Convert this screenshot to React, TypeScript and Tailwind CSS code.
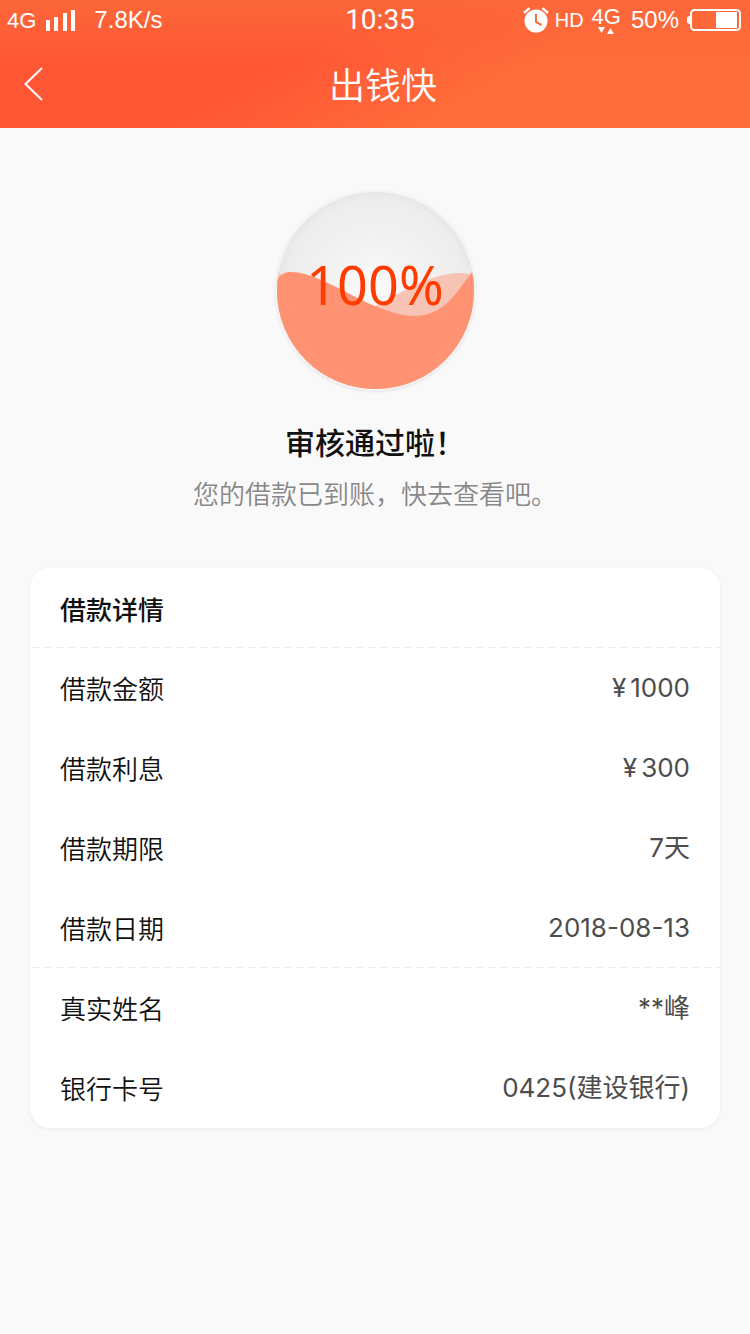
interface DetailRow {
  label: string
  value: string
  unit?: string
}

const LOAN_ROWS: DetailRow[] = [
  { label: '借款金额', value: '1000', unit: '¥' },
  { label: '借款利息', value: '300', unit: '¥' },
  { label: '借款期限', value: '7天' },
  { label: '借款日期', value: '2018-08-13' },
]

const ACCOUNT_ROWS: DetailRow[] = [
  { label: '真实姓名', value: '**峰' },
  { label: '银行卡号', value: '0425(建设银行)' },
]

function SignalIcon(): React.JSX.Element {
  return (
    <svg className="ml-2.5 h-[21px] w-[30px]" viewBox="0 0 30 21" fill="currentColor" aria-hidden="true">
      <rect x="0" y="10" width="4" height="11" />
      <rect x="8" y="7" width="4" height="14" />
      <rect x="17" y="3" width="4" height="18" />
      <rect x="25" y="0" width="4" height="21" />
    </svg>
  )
}

function AlarmIcon(): React.JSX.Element {
  return (
    <svg className="h-[26px] w-[26px]" viewBox="0 0 26 26" aria-hidden="true">
      <circle cx="13" cy="14" r="11.5" fill="#fff" />
      <path d="M1 6 6.5 1.2M25 6 19.5 1.2" stroke="#fff" strokeWidth="2.4" fill="none" />
      <path d="M13 7v8l5.5 3" stroke="#fd6739" strokeWidth="2" fill="none" />
    </svg>
  )
}

function BatteryIcon(): React.JSX.Element {
  return (
    <svg className="ml-2 h-[22px] w-[54px]" viewBox="0 0 54 22" aria-hidden="true">
      <rect x="4" y="1" width="49" height="20" rx="3.5" fill="none" stroke="#fff" strokeWidth="2" />
      <path d="M3.5 6v10L0 13.5v-5z" fill="#fff" />
      <rect x="29" y="3" width="21" height="16" fill="#fff" />
    </svg>
  )
}

function StatusBar(): React.JSX.Element {
  return (
    <div className="grid h-10 grid-cols-[1fr_auto_1fr] items-center pr-[9px] pl-[7px] font-['Liberation_Sans',sans-serif]">
      <div className="flex items-center">
        <span className="text-[22px]">4G</span>
        <SignalIcon />
        <span className="ml-[18px] text-2xl">7.8K/s</span>
      </div>
      <span className="pl-3 font-[Roboto,sans-serif] text-[28px] leading-9">10:35</span>
      <div className="flex items-center justify-end">
        <AlarmIcon />
        <span className="ml-1.5 text-xl">HD</span>
        <span className="ml-2 flex flex-col items-center text-[22px] leading-5">
          4G
          <svg className="h-[7px] w-4" viewBox="0 0 16 7" fill="currentColor" aria-hidden="true">
            <path d="M0 0h7L3.500 6zM9 7h7L12.500 1z" />
          </svg>
        </span>
        <span className="ml-2.5 text-2xl">50%</span>
        <BatteryIcon />
      </div>
    </div>
  )
}

function Header(): React.JSX.Element {
  return (
    <header className="bg-[linear-gradient(180deg,#fc6739_0%,#fc673900_50%),linear-gradient(150deg,#ff5635_40%,#ff6c3a_66%)] text-white">
      <StatusBar />
      <div className="grid h-22 grid-cols-[1fr_auto_1fr] items-center px-6">
        <button type="button" aria-label="返回" className="h-9 w-5">
          <svg className="h-9 w-5" viewBox="0 0 20 36" fill="none" stroke="currentColor" strokeWidth="2" aria-hidden="true">
            <path d="M18 2 1.500 18 18 34" />
          </svg>
        </button>
        <h1 className="pb-0.5 pl-4 text-4xl font-[350]">出钱快</h1>
      </div>
    </header>
  )
}

function ProgressBall(): React.JSX.Element {
  return (
    <div className="grid place-items-center">
      <svg className="col-start-1 row-start-1 size-[210px]" viewBox="0 0 210 210" aria-hidden="true">
        <defs>
          <radialGradient id="ball">
            <stop offset="0%" stopColor="#fafafa" />
            <stop offset="65%" stopColor="#f0f0f0" />
            <stop offset="92%" stopColor="#ededed" />
            <stop offset="100%" stopColor="#e6e6e6" />
          </radialGradient>
          <clipPath id="ballClip">
            <circle cx="105.500" cy="105.500" r="98.500" />
          </clipPath>
          <filter id="ballShadow" x="-10%" y="-10%" width="120%" height="120%">
            <feDropShadow dx="0" dy="1" stdDeviation="1.500" floodColor="#000" floodOpacity="0.1" />
          </filter>
        </defs>
        <circle cx="105.500" cy="105.500" r="100" fill="#f3f3f3" filter="url(#ballShadow)" />
        <circle cx="105.500" cy="105.500" r="98.500" fill="url(#ball)" />
        <g clipPath="url(#ballClip)">
          <path
            d="M0 86C14 86 16 96 26 107C50 134 84 132 105 121C130 109 160 88 190 88C198 88 202 90 210 96V210H0Z"
            fill="#f7c3b4"
          />
          <path
            d="M5 100C8 91 13 87 21 87C45 87 78 110 105 121C120 127 132 131 144 131C174 131 186 108 202 87H210V210H0Z"
            fill="#ff9272"
          />
        </g>
      </svg>
      <span className="col-start-1 row-start-1 pb-3 font-['Noto_Sans',sans-serif] text-[54px] leading-none text-[#ff3c00]">
        100%
      </span>
    </div>
  )
}

function DetailRows({ rows }: { rows: DetailRow[] }): React.JSX.Element {
  return (
    <dl>
      {rows.map((row) => (
        <div key={row.label} className="flex h-20 items-center justify-between px-[30px] pb-0.5 text-[26px]">
          <dt className="font-[350]">{row.label}</dt>
          <dd className="font-[Inter,'Noto_Sans_CJK_SC',sans-serif] text-[#4d4d4d]">
            {row.unit && <span className="mr-1">{row.unit}</span>}
            {row.value}
          </dd>
        </div>
      ))}
    </dl>
  )
}

function Divider(): React.JSX.Element {
  return (
    <div className="-mt-px ml-0.5 h-px bg-[repeating-linear-gradient(90deg,#ebebeb_0_7px,transparent_7px_12px)]" />
  )
}

export default function App(): React.JSX.Element {
  return (
    <div className="min-h-screen bg-[#f9f9f9] font-['Noto_Sans_CJK_SC',sans-serif] text-[#111]">
      <Header />
      <main className="px-[30px] pt-[57px] pb-8">
        <ProgressBall />
        <div className="mt-[26px] text-center">
          <h2 className="text-3xl leading-10 font-medium">审核通过啦！</h2>
          <p className="mt-3 text-[26px] leading-10 font-[350] text-[#888]">您的借款已到账，快去查看吧。</p>
        </div>
        <section className="mt-[55px] rounded-[20px] bg-white shadow-[0_1px_4px_#0000000f]">
          <h3 className="flex h-20 items-center px-[30px] text-[26px] font-medium">借款详情</h3>
          <Divider />
          <DetailRows rows={LOAN_ROWS} />
          <Divider />
          <DetailRows rows={ACCOUNT_ROWS} />
        </section>
      </main>
    </div>
  )
}
